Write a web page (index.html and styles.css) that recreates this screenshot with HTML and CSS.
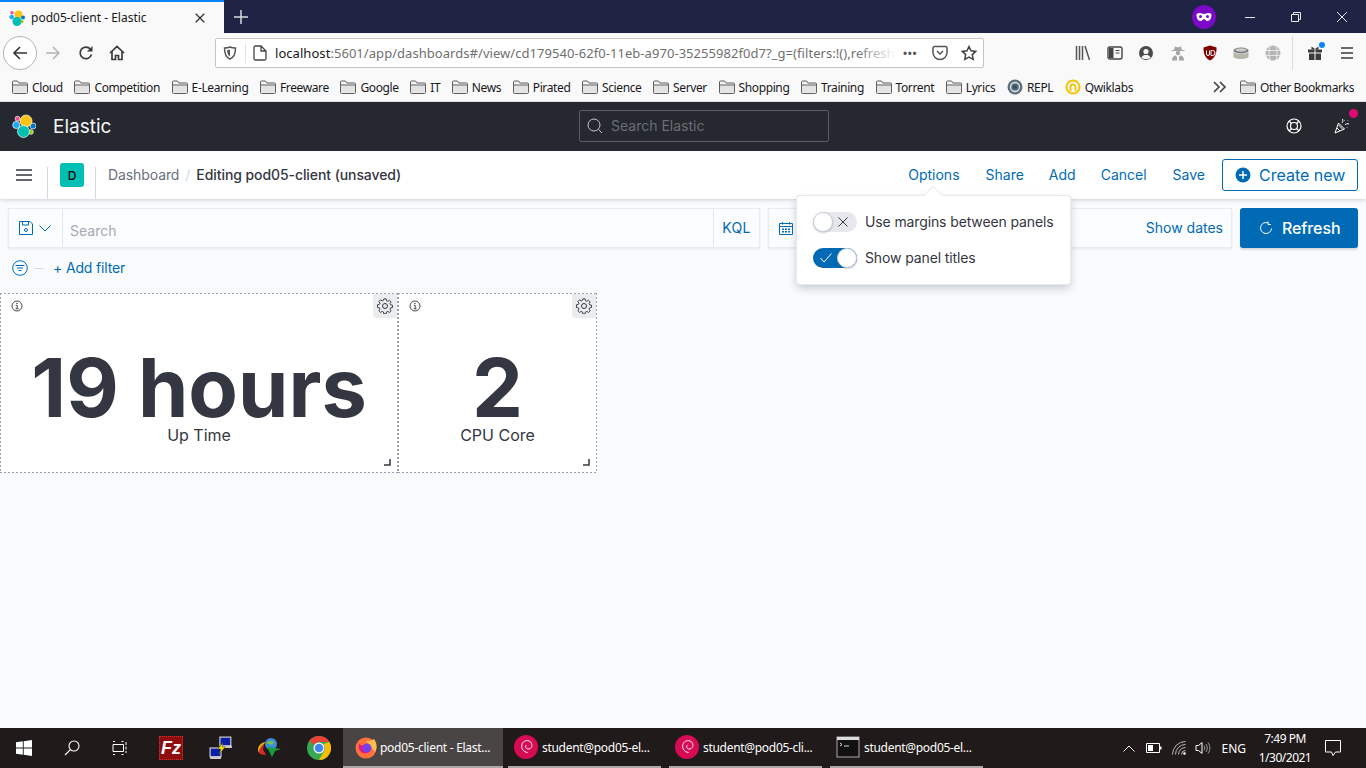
FILE: index.html
```html
<!DOCTYPE html>
<html lang="en">
<head>
<meta charset="utf-8">
<title>pod05-client - Elastic</title>
<link rel="stylesheet" href="styles.css">
</head>
<body>
<svg class="defs" width="0" height="0" aria-hidden="true">
  <defs>
    <symbol id="folder" viewBox="0 0 16 14"><path d="M.5 12.500V2a1 1 0 0 1 1-1h4l1.500 2h7.500a1 1 0 0 1 1 1v8.500a1 1 0 0 1-1 1h-13a1 1 0 0 1-1-1z" fill="#f4f4f4" stroke="#5f5f5f"/><path d="M1 5.500h14v7H1z" fill="#e3e3e3"/><path d="M.5 5h15" stroke="#5f5f5f"/></symbol>
    <symbol id="gear" viewBox="0 0 16 16"><path d="M6.800.8h2.400l.4 2 1.300.6 1.800-1.100 1.700 1.700-1.100 1.800.6 1.300 2 .4v2.400l-2 .4-.6 1.300 1.100 1.800-1.700 1.700-1.800-1.100-1.300.6-.4 2H6.800l-.4-2-1.300-.6-1.800 1.100-1.700-1.700 1.100-1.800-.6-1.300-2-.4V7l2-.4.6-1.300-1.100-1.800 1.700-1.700 1.800 1.100 1.300-.6z" transform="translate(.4 .1) scale(.95)" fill="none" stroke="#343741" stroke-width="1"/><circle cx="8" cy="8" r="2.500" fill="none" stroke="#343741"/></symbol>
    <symbol id="info" viewBox="0 0 12 12"><circle cx="6" cy="6" r="5" fill="none" stroke="#343741" stroke-width=".9"/><path d="M4.800 5.400H6.200V8.800M4.600 8.800h3" fill="none" stroke="#343741" stroke-width=".9"/><circle cx="5.900" cy="3.500" r=".7" fill="#343741"/></symbol>
    <symbol id="debian" viewBox="0 0 24 24"><circle cx="12" cy="12" r="12" fill="#d70a53"/><path d="M13.500 17.500C9.500 17 7 13.500 7.800 9.800 8.600 6.500 12 4.800 15 6c2.700 1.100 3.700 4.100 2.300 6.400-1.200 1.800-3.500 2.100-4.900 1-1-.9-1-2.600 0-3.500" fill="none" stroke="#fff" stroke-width="1"/></symbol>
  </defs>
</svg>

<header class="tabbar">
  <div class="tab">
    <svg class="favicon" viewBox="0 0 16 16"><circle cx="9.500" cy="4.500" r="4" fill="#fec514"/><circle cx="8" cy="11.500" r="4.500" fill="#00bfb3"/><circle cx="2.700" cy="7" r="2.300" fill="#1ba9f5"/><circle cx="3" cy="2.700" r="1.700" fill="#f04e98"/><circle cx="14" cy="7.500" r="2" fill="#0077cc"/><circle cx="13" cy="11.500" r="1.500" fill="#93c90e"/></svg>
    <span class="tab-title">pod05-client - Elastic</span>
    <svg class="tab-close" viewBox="0 0 10 10"><path d="M.7.700l8.600 8.600M9.300.700L.7 9.300" stroke="#333" stroke-width="1.300"/></svg>
  </div>
  <svg class="new-tab" viewBox="0 0 14 14"><path d="M7 0v14M0 7h14" stroke="#d8d8e0" stroke-width="1.500"/></svg>
  <div class="spacer"></div>
  <svg class="private" viewBox="0 0 24 24"><circle cx="12" cy="12" r="12" fill="#7c09c9"/><path d="M4.500 10c0-1.500 1.500-2 3-2 2 0 3 1 4.500 1s2.500-1 4.500-1c1.500 0 3 .5 3 2 0 3-1.500 6-4 6-2 0-2.500-2-3.500-2s-1.500 2-3.500 2c-2.500 0-4-3-4-6z" fill="#fff"/><circle cx="8.500" cy="11.500" r="1.500" fill="#7c09c9"/><circle cx="15.500" cy="11.500" r="1.500" fill="#7c09c9"/></svg>
  <div class="win-btn"><svg viewBox="0 0 10 10"><path d="M0 5.500h10" stroke="#e6e6ee"/></svg></div>
  <div class="win-btn"><svg viewBox="0 0 10 10"><path d="M.5 2.500h7v7h-7zM2.500 2.500V.5h7v7h-2" fill="none" stroke="#e6e6ee"/></svg></div>
  <div class="win-btn"><svg viewBox="0 0 10 10"><path d="M0 0l10 10M10 0L0 10" stroke="#e6e6ee"/></svg></div>
</header>

<nav class="toolbar">
  <div class="back-btn"><svg viewBox="0 0 16 16"><path d="M15 8H2M8 2L2 8l6 6" fill="none" stroke="#333" stroke-width="1.600"/></svg></div>
  <svg class="tool-ico fwd" viewBox="0 0 16 16"><path d="M1 8h13M8 2l6 6-6 6" fill="none" stroke="#b4b4b4" stroke-width="1.500"/></svg>
  <svg class="tool-ico reload" viewBox="0 0 16 16"><path d="M13.500 9.500A5.800 5.800 0 1 1 12.300 4" fill="none" stroke="#3a3a3a" stroke-width="1.700"/><path d="M14.500 1v5.500H9z" fill="#3a3a3a"/></svg>
  <svg class="tool-ico home" viewBox="0 0 16 16"><path d="M1 8l7-6.500L15 8M3 6.500V14.500h3.500v-4h3v4H13V6.500" fill="none" stroke="#3a3a3a" stroke-width="1.700"/></svg>
  <div class="urlbar">
    <svg class="shield" viewBox="0 0 14 14"><path d="M7 1c2 .9 3.500 1 5.500 1 0 5-1.500 9.500-5.500 11C3 11.500 1.500 7 1.500 2 3.500 2 5 1.900 7 1z" fill="none" stroke="#555" stroke-width="1.500"/><path d="M7 3.500v7C5 9.500 4.200 7 4 4.300 5 4.300 6 4 7 3.500z" fill="#555"/></svg>
    <span class="url-sep"></span>
    <svg class="page-ico" viewBox="0 0 14 16"><path d="M1 2.500A1.500 1.500 0 0 1 2.500 1h5.500L13 6v7.500a1.500 1.500 0 0 1-1.500 1.500h-9A1.500 1.500 0 0 1 1 13.500zM8 1v5h5" fill="none" stroke="#444" stroke-width="1.300"/></svg>
    <div class="url"><span class="url-host">localhost</span>:5601/app/dashboards#/view/cd179540-62f0-11eb-a970-35255982f0d7?_g=(filters:!(),refresh</div>
    <span class="url-fade"></span>
    <span class="url-dots">•••</span>
    <svg class="url-ico pocket" viewBox="0 0 16 16"><path d="M1 3a1.500 1.500 0 0 1 1.500-1.500h11A1.500 1.500 0 0 1 15 3v4.500a7 7 0 0 1-14 0z" fill="none" stroke="#555" stroke-width="1.500"/><path d="M5 6l3 3 3-3" fill="none" stroke="#555" stroke-width="1.500"/></svg>
    <svg class="url-ico star" viewBox="0 0 16 16"><path d="M8 1.500l2 4.300 4.700.6-3.400 3.200.9 4.700L8 12l-4.200 2.300.9-4.700L1.300 6.400 6 5.800z" fill="none" stroke="#444" stroke-width="1.500"/></svg>
  </div>
  <div class="ext-icons">
    <svg class="ext" viewBox="0 0 16 16"><path d="M1.500 1v14M4.500 1v14M7.500 1v14M10 1l4.500 14" stroke="#555" stroke-width="1.500"/></svg>
    <svg class="ext" viewBox="0 0 16 16"><rect x="1" y="2" width="14" height="12" rx="2" fill="none" stroke="#444" stroke-width="1.400"/><path d="M2 3h4.500v10H2z" fill="#444"/><path d="M8.500 5.500h4M8.500 8h4" stroke="#444"/></svg>
    <svg class="ext" viewBox="0 0 16 16"><circle cx="8" cy="8" r="7" fill="#4a4a4a"/><circle cx="8" cy="6.500" r="2.600" fill="#f9f9fa"/><path d="M3.500 12.500C4.500 10.500 6 10 8 10s3.500.5 4.500 2.500C11.500 13.800 10 14 8 14s-3.500-.2-4.500-1.500z" fill="#f9f9fa"/></svg>
    <svg class="ext" viewBox="0 0 16 16"><path d="M5 1.500l3 1 3-1 1 3.500h2.500v1h-13V5H4z" fill="#a5a5a5"/><circle cx="8" cy="8" r="2.200" fill="#a5a5a5"/><path d="M2 15.500c0-3.500 1.500-5 4-5l1 2v3zM14 15.500c0-3.500-1.500-5-4-5l-1 2v3z" fill="#a5a5a5"/></svg>
    <svg class="ext" viewBox="0 0 16 16"><path d="M8 .5l6.500 2c.2 6-1.500 10.500-6.500 13-5-2.500-6.700-7-6.500-13z" fill="#800000"/><path d="M4.500 5.500v3.500a1.500 1.500 0 0 0 3 0V5.500M9 5.500V10.500h1.500a2.500 2.500 0 0 0 0-5z" fill="none" stroke="#fff" stroke-width="1"/></svg>
    <svg class="ext" viewBox="0 0 16 16"><ellipse cx="8" cy="5.500" rx="7.500" ry="3" fill="#777"/><ellipse cx="8" cy="5" rx="5.500" ry="1.700" fill="#ccc"/><path d="M.5 6.500v5c0 1.500 3.200 2.500 7.500 2.500s7.500-1 7.500-2.500v-5c-1 1.800-4.500 2.500-7.500 2.500S1.500 8.300.5 6.500z" fill="#b5b5a8"/></svg>
    <svg class="ext" viewBox="0 0 16 16"><circle cx="8" cy="8" r="7.500" fill="#b5b5b5"/><path d="M0 5.500h16M0 10.500h16M5.500 0c-2 5-2 11 0 16M10.500 0c2 5 2 11 0 16" fill="none" stroke="#f2f2f2" stroke-width=".8"/></svg>
    <span class="ext-sep"></span>
    <span class="gift"><svg class="ext" viewBox="0 0 16 16"><path d="M1 4.500h6.500v3H1zM8.500 4.500H15v3H8.500zM2 8.500h5.500V15H2zM8.500 8.500H14V15H8.500z" fill="#3a3a3a"/><path d="M4.500 1.500L8 4l3.500-2.500v3h-7z" fill="#3a3a3a"/></svg><span class="gift-dot"></span></span>
    <svg class="ext" viewBox="0 0 16 16"><path d="M2 3h12M2 8h12M2 13h12" stroke="#3a3a3a" stroke-width="1.700"/></svg>
  </div>
</nav>

<div class="bookmarks">
  <a class="bm"><svg class="bm-ico"><use href="#folder"/></svg>Cloud</a>
  <a class="bm"><svg class="bm-ico"><use href="#folder"/></svg>Competition</a>
  <a class="bm"><svg class="bm-ico"><use href="#folder"/></svg>E-Learning</a>
  <a class="bm"><svg class="bm-ico"><use href="#folder"/></svg>Freeware</a>
  <a class="bm"><svg class="bm-ico"><use href="#folder"/></svg>Google</a>
  <a class="bm"><svg class="bm-ico"><use href="#folder"/></svg>IT</a>
  <a class="bm"><svg class="bm-ico"><use href="#folder"/></svg>News</a>
  <a class="bm"><svg class="bm-ico"><use href="#folder"/></svg>Pirated</a>
  <a class="bm"><svg class="bm-ico"><use href="#folder"/></svg>Science</a>
  <a class="bm"><svg class="bm-ico"><use href="#folder"/></svg>Server</a>
  <a class="bm"><svg class="bm-ico"><use href="#folder"/></svg>Shopping</a>
  <a class="bm"><svg class="bm-ico"><use href="#folder"/></svg>Training</a>
  <a class="bm"><svg class="bm-ico"><use href="#folder"/></svg>Torrent</a>
  <a class="bm"><svg class="bm-ico"><use href="#folder"/></svg>Lyrics</a>
  <a class="bm"><svg class="bm-ico" viewBox="0 0 16 16"><circle cx="8" cy="8" r="7.500" fill="#5d6f7c"/><circle cx="8" cy="8" r="4.500" fill="none" stroke="#dfe6ea" stroke-width="1.300"/><circle cx="8" cy="8" r="2" fill="#3d4f5c"/></svg>REPL</a>
  <a class="bm"><svg class="bm-ico" viewBox="0 0 16 16"><circle cx="8" cy="8" r="6.500" fill="none" stroke="#f5c400" stroke-width="2"/><path d="M5.500 12V8a2.500 2.500 0 0 1 5 0v4" fill="none" stroke="#f5c400" stroke-width="1.800"/></svg>Qwiklabs</a>
  <div class="spacer"></div>
  <svg class="chev" viewBox="0 0 14 12"><path d="M1 1l5 5-5 5M7 1l5 5-5 5" fill="none" stroke="#444" stroke-width="1.700"/></svg>
  <a class="bm"><svg class="bm-ico"><use href="#folder"/></svg>Other Bookmarks</a>
</div>

<div class="k-header">
  <div class="k-brand">
    <svg class="k-logo" viewBox="0 0 24 24"><g stroke="#fff" stroke-width=".7"><circle cx="5.500" cy="4.700" r="2.400" fill="#f04e98"/><circle cx="4.300" cy="11" r="3.600" fill="#1ba9f5"/><circle cx="21" cy="12" r="3" fill="#0077cc"/><circle cx="19" cy="18" r="2.300" fill="#93c90e"/><circle cx="14" cy="7" r="6" fill="#fec514"/><circle cx="11.500" cy="17.500" r="6" fill="#00bfb3"/></g></svg>
    <span class="k-name">Elastic</span>
  </div>
  <div class="k-search">
    <svg class="k-search-ico" viewBox="0 0 16 16"><circle cx="7" cy="7" r="6" fill="none" stroke="#c8c9cc"/><path d="M11.500 11.500L15 15" stroke="#c8c9cc"/></svg>
    <span class="k-search-text">Search Elastic</span>
  </div>
  <div class="k-right">
    <svg class="k-ico" viewBox="0 0 16 16"><circle cx="8" cy="8" r="7" fill="none" stroke="#fff" stroke-width="1.200"/><circle cx="8" cy="8" r="3.500" fill="none" stroke="#fff" stroke-width="1.200"/><path d="M3 3l2.500 2.500M13 3l-2.500 2.500M3 13l2.500-2.500M13 13l-2.500-2.500" stroke="#fff" stroke-width="1.200"/></svg>
    <span class="k-news">
      <svg class="k-ico" viewBox="0 0 16 16"><path d="M1 15l3.500-10 6 6z" fill="none" stroke="#fff"/><path d="M3 10l3 3M4.500 7l4 4M8 5c1-1 1-2.500.5-4M11 7c1-1.500 2.500-1.500 4-1M10.500 2.500v.5M14 2v.5M13 9.500v.5" stroke="#fff" fill="none"/></svg>
      <span class="k-news-dot"></span>
    </span>
  </div>
</div>

<main class="kibana">
  <div class="k-bar">
    <svg class="burger" viewBox="0 0 16 12"><path d="M0 1h16M0 6h16M0 11h16" stroke="#343741" stroke-width="1.700"/></svg>
    <span class="k-sep sep-a"></span>
    <span class="avatar">D</span>
    <span class="k-sep sep-b"></span>
    <span class="crumb">Dashboard</span>
    <span class="crumb-slash">/</span>
    <span class="crumb-cur">Editing pod05-client (unsaved)</span>
    <div class="spacer"></div>
    <a class="k-link">Options</a>
    <a class="k-link l-share">Share</a>
    <a class="k-link l-add">Add</a>
    <a class="k-link l-cancel">Cancel</a>
    <a class="k-link l-save">Save</a>
    <a class="create-btn">
      <svg class="create-ico" viewBox="0 0 16 16"><circle cx="8" cy="8" r="7.500" fill="#006bb4"/><path d="M8 4v8M4 8h8" stroke="#fff" stroke-width="1.500"/></svg>
      Create new
    </a>
  </div>

  <div class="query-row">
    <div class="query-box">
      <div class="saved-btn">
        <svg class="saved-ico" viewBox="0 0 14 14"><path d="M.5.500h10.500l2.500 2.500v10.500H.5z" fill="none" stroke="#006bb4"/><path d="M3.500.500v3.500h6V.500" fill="none" stroke="#006bb4"/><circle cx="7" cy="9" r="1.500" fill="none" stroke="#006bb4"/></svg>
        <svg class="saved-chev" viewBox="0 0 12 7"><path d="M.5.500l5.500 5.500L11.500.500" fill="none" stroke="#006bb4"/></svg>
      </div>
      <span class="search-ph">Search</span>
      <a class="kql">KQL</a>
    </div>
    <div class="date-box">
      <div class="date-cal"><svg class="cal-ico" viewBox="0 0 14 14"><path d="M.5 2.500h13v11H.5zM.5 5.500h13" fill="none" stroke="#006bb4"/><path d="M3.500 1v2.500M10.500 1v2.500" stroke="#006bb4"/><path d="M3 7.500h2v1.500H3zM6 7.500h2v1.500H6zM9 7.500h2v1.500H9zM3 10h2v1.500H3zM6 10h2v1.500H6zM9 10h2v1.500H9z" fill="#006bb4"/></svg></div>
      <div class="spacer"></div>
      <a class="show-dates">Show dates</a>
    </div>
    <a class="refresh-btn">
      <svg class="refresh-ico" viewBox="0 0 14 14"><path d="M12.500 7.500A5.500 5.500 0 1 1 9 1.900M9 .5v3h2.800" fill="none" stroke="#fff"/></svg>
      Refresh
    </a>
  </div>

  <div class="filter-row">
    <svg class="filter-ico" viewBox="0 0 16 16"><circle cx="8" cy="8" r="7.300" fill="none" stroke="#006bb4"/><path d="M3.500 5.500h9M5 8h6M6.500 10.500h3" stroke="#006bb4"/></svg>
    <span class="filter-dash"></span>
    <a class="add-filter">+ Add filter</a>
  </div>

  <section class="grid">
    <article class="panel panel-wide">
      <svg class="p-info"><use href="#info"/></svg>
      <span class="p-gear"><svg class="p-gear-ico"><use href="#gear"/></svg></span>
      <div class="metric">19 hours</div>
      <div class="metric-label">Up Time</div>
      <svg class="p-resize" viewBox="0 0 7 7"><path d="M6 0v6H0" fill="none" stroke="#343741" stroke-width="1.500"/></svg>
    </article>
    <article class="panel panel-narrow">
      <svg class="p-info"><use href="#info"/></svg>
      <span class="p-gear"><svg class="p-gear-ico"><use href="#gear"/></svg></span>
      <div class="metric">2</div>
      <div class="metric-label">CPU Core</div>
      <svg class="p-resize" viewBox="0 0 7 7"><path d="M6 0v6H0" fill="none" stroke="#343741" stroke-width="1.500"/></svg>
    </article>
  </section>

  <div class="popover">
    <span class="pop-arrow"></span>
    <div class="pop-row">
      <span class="switch off"><span class="knob"></span><svg class="sw-x" viewBox="0 0 10 10"><path d="M.5.500l9 9M9.500.500l-9 9" stroke="#343741"/></svg></span>
      <span class="pop-label">Use margins between panels</span>
    </div>
    <div class="pop-row">
      <span class="switch on"><svg class="sw-check" viewBox="0 0 12 10"><path d="M.5 5l3.500 4L11.500.5" fill="none" stroke="#fff"/></svg><span class="knob"></span></span>
      <span class="pop-label">Show panel titles</span>
    </div>
  </div>
</main>

<footer class="taskbar">
  <svg class="tb-ico t-win" viewBox="0 0 16 16"><path d="M0 2.300L6.800 1.300V7.500H0zM7.700 1.200L16 0V7.500H7.700zM0 8.400h6.800v6.300L0 13.700zM7.700 8.400H16V16l-8.300-1.200z" fill="#fff"/></svg>
  <svg class="tb-ico t-search" viewBox="0 0 16 16"><circle cx="10" cy="6" r="5" fill="none" stroke="#fff" stroke-width="1.100"/><path d="M6.500 9.500L1 15" stroke="#fff" stroke-width="1.100"/></svg>
  <svg class="tb-ico t-view" viewBox="0 0 16 16"><path d="M1 4.500h10.500v7H1zM1 1.500h2M9.500 1.500h2M1 14.500h2M9.500 14.500h2M14 2v3M14 6.500v3M14 11v2" fill="none" stroke="#fff"/></svg>
  <span class="fz-ico"><span class="fz-text">Fz</span></span>
  <svg class="tb-ico t-net" viewBox="0 0 22 22"><rect x="10" y="1" width="10" height="8" fill="#0a1fa8" stroke="#ddd"/><rect x="1" y="11" width="10" height="8" fill="#0a1fa8" stroke="#ddd"/><path d="M1 20h10M11 10h10" stroke="#ccc" stroke-width="2"/><path d="M13 6l-5 6h3l-2 5 6-7h-3z" fill="#ffe600" stroke="#222" stroke-width=".4"/></svg>
  <svg class="tb-ico t-idm" viewBox="0 0 24 22"><path d="M1 13c0-5 4-8 8-8-3 2-4 5-3 8l2 4C4 17 1 16 1 13z" fill="#e3b300"/><path d="M2 15c0-3 2-6 5-8l-1 6 3 5C5 18 2 17 2 15z" fill="#d3282d"/><circle cx="14" cy="7" r="6" fill="#3a8fd8"/><path d="M9 6c2-2 5-3 8-1l-2 3z" fill="#7cc243"/><path d="M10 10l14 2-6 2-3 6z" fill="#1a9b3c"/></svg>
  <svg class="tb-ico t-chrome" viewBox="0 0 24 24"><circle cx="12" cy="12" r="12" fill="#34a853"/><path d="M12 0a12 12 0 0 1 10.400 6H12a6 6 0 0 0-5.500 3.500L2.500 4.500A12 12 0 0 1 12 0z" fill="#ea4335"/><path d="M22.400 6A12 12 0 0 1 12 24l5.200-9A6 6 0 0 0 16.500 8z" fill="#fbbc05"/><circle cx="12" cy="12" r="5.500" fill="#fff"/><circle cx="12" cy="12" r="4.300" fill="#4285f4"/></svg>
  <div class="tb-item active">
    <svg class="tb-app" viewBox="0 0 24 24"><circle cx="12" cy="13" r="10.500" fill="#ff7139"/><path d="M20 4c3 4 3.500 9 1 13L12 6c3 0 6-.5 8-2z" fill="#ffbd4f"/><path d="M4 6c1 4 3 6 8 3 4 1 5 4 4 6-1 3-4 4-7 3C6 17 4 13 5 10z" fill="#e31587"/><circle cx="13" cy="13" r="4.500" fill="#7542e5"/></svg>
    <span class="tb-text">pod05-client - Elast...</span>
  </div>
  <div class="tb-item">
    <svg class="tb-app"><use href="#debian"/></svg>
    <span class="tb-text">student@pod05-el...</span>
  </div>
  <div class="tb-item">
    <svg class="tb-app"><use href="#debian"/></svg>
    <span class="tb-text">student@pod05-cli...</span>
  </div>
  <div class="tb-item">
    <svg class="tb-app" viewBox="0 0 24 24"><rect x="1" y="2" width="22" height="20" fill="#111" stroke="#aaa"/><rect x="1" y="2" width="22" height="3" fill="#ddd"/><path d="M4 8l2 1.500L4 11M8 11h5" fill="none" stroke="#ddd"/></svg>
    <span class="tb-text">student@pod05-el...</span>
  </div>
  <div class="spacer"></div>
  <div class="tray">
    <svg class="tr-up" viewBox="0 0 12 7"><path d="M.5 6.500L6 1l5.500 5.500" fill="none" stroke="#fff"/></svg>
    <svg class="tr-bat" viewBox="0 0 16 10"><path d="M.5.500h13v9H.5z" fill="none" stroke="#fff"/><path d="M2 2h5v6H2z" fill="#fff"/><path d="M14 3.500h1.500v3H14z" fill="#fff"/></svg>
    <svg class="tr-wifi" viewBox="0 0 14 14"><path d="M.5 13.500a13 13 0 0 1 13-13M3.500 13.500a10 10 0 0 1 10-10M6.500 13.500a7 7 0 0 1 7-7M9.500 13.500a4 4 0 0 1 4-4" fill="none" stroke="#bbb"/><circle cx="12.500" cy="12.500" r="1.300" fill="#fff"/></svg>
    <svg class="tr-vol" viewBox="0 0 16 14"><path d="M1 4.500h2.500L7 1.500v11l-3.500-3H1z" fill="none" stroke="#fff"/><path d="M9 4.500c1 1.500 1 3.500 0 5M11 3c1.700 2.500 1.700 5.500 0 8M13 1.500c2.500 3.500 2.500 7.500 0 11" fill="none" stroke="#999"/></svg>
    <span class="tr-lang">ENG</span>
    <div class="tr-clock"><span>7:49 PM</span><span>1/30/2021</span></div>
    <svg class="tr-note" viewBox="0 0 16 16"><path d="M.5.500h15v11.500h-5L8 15.500 6.500 12h-6z" fill="none" stroke="#fff"/></svg>
  </div>
</footer>
</body>
</html>
```
FILE: styles.css
```css
* { box-sizing: border-box; }
html, body { margin: 0; padding: 0; width: 1366px; height: 768px; overflow: hidden; }
body { display: flex; flex-direction: column; font-family: "Inter", "Liberation Sans", sans-serif; background: #fafbfd; color: #343741; position: relative; }
svg { display: block; flex: none; }
.defs { position: absolute; }
.spacer { flex: 1; }
a { color: inherit; text-decoration: none; }

/* browser tab strip */
.tabbar { height: 33px; background: #1f2444; display: flex; align-items: center; flex: none; }
.tab { width: 224px; height: 33px; background: #f9f9fa; border-top: 2px solid #0a84ff; display: flex; align-items: center; padding-left: 9px; }
.favicon { width: 16px; height: 16px; }
.tab-title { font: 12px "Noto Sans", sans-serif; color: #18181a; margin-left: 6px; width: 163px; white-space: nowrap; }
.tab-close { width: 10px; height: 10px; margin-left: 1px; }
.new-tab { width: 14px; height: 14px; margin-left: 10px; }
.private { width: 24px; height: 24px; margin-right: 11px; }
.win-btn { width: 46px; height: 33px; display: flex; align-items: center; justify-content: center; }
.win-btn svg { width: 10px; height: 10px; }
.win-btn:last-child { margin-right: 1px; }

/* browser toolbar */
.toolbar { height: 39px; background: #f9f9fa; display: flex; align-items: center; flex: none; padding-left: 3px; }
.back-btn { width: 34px; height: 34px; flex: none; border-radius: 50%; border: 1px solid #b5b5b5; background: #fff; display: flex; align-items: center; justify-content: center; }
.back-btn svg { width: 16px; height: 16px; }
.tool-ico { width: 16px; height: 16px; }
.fwd { margin-left: 8px; }
.reload { margin-left: 17px; }
.home { margin-left: 15px; }
.urlbar { width: 769px; height: 30px; margin-left: 90px; background: #fff; border: 1px solid #c4c4c4; border-radius: 2px; display: flex; align-items: center; position: relative; flex: none; padding-left: 7px; }
.shield { width: 14px; height: 14px; }
.url-sep { width: 1px; height: 20px; background: #e4e4e4; margin-left: 8px; }
.page-ico { width: 14px; height: 16px; margin-left: 7px; }
.url { font: 13px "Noto Sans", sans-serif; letter-spacing: .05px; color: #707070; margin-left: 8px; width: 619px; white-space: nowrap; overflow: hidden; flex: none; }
.url-host { color: #18181a; }
.url-fade { position: absolute; left: 640px; top: 0; width: 40px; height: 28px; background: linear-gradient(to right, rgba(255,255,255,0), #fff); }
.url-dots { font: 700 11px "Noto Sans", sans-serif; color: #555; margin-left: 9px; letter-spacing: .6px; width: 18px; flex: none; white-space: nowrap; }
.url-ico { width: 16px; height: 16px; }
.pocket { margin-left: 11px; }
.star { margin-left: 13px; }
.ext-icons { display: flex; align-items: center; margin-left: 91px; flex: none; }
.ext { width: 16px; height: 16px; margin-right: 15.700px; }
.ext-sep { width: 1px; height: 34px; background: #dcdcdc; margin-right: 14px; margin-left: -5px; }
.gift { position: relative; display: block; }
.gift-dot { position: absolute; right: 14px; top: -3px; width: 6px; height: 6px; background: #0a84ff; border-radius: 50%; }

/* bookmarks */
.bookmarks { height: 30px; background: #f9f9fa; display: flex; align-items: center; padding: 1px 12px 0 12px; gap: 11.600px; flex: none; font: 12px "Noto Sans", sans-serif; color: #18181a; border-bottom: 1px solid #e0e0e0; }
.bm { display: flex; align-items: center; gap: 4px; white-space: nowrap; letter-spacing: -.38px; }
.bm-ico { width: 16px; height: 16px; }
.chev { width: 14px; height: 12px; margin-right: 1px; }

/* kibana header */
.k-header { height: 49px; background: #25282f; display: flex; align-items: center; flex: none; position: relative; padding: 0 0 1px 12px; }
.k-brand { display: flex; align-items: center; width: 567px; }
.k-logo { width: 24px; height: 24px; }
.k-name { font-size: 19px; font-weight: 400; color: #f5f7fa; margin-left: 17px; }
.k-search { width: 250px; height: 32px; border: 1px solid #5a5d63; border-radius: 2px; display: flex; align-items: center; padding-left: 7px; background: #25282f; }
.k-search-ico { width: 16px; height: 16px; }
.k-search-text { font-size: 14px; color: #6b6e75; margin: 0 0 2px 8px; }
.k-right { margin-left: auto; display: flex; align-items: center; gap: 32px; padding-right: 16px; }
.k-ico { width: 16px; height: 16px; }
.k-news { position: relative; display: block; }
.k-news-dot { position: absolute; top: -9px; right: -8px; width: 9px; height: 9px; border-radius: 50%; background: #dd0a73; }

/* kibana app */
.kibana { flex: 1; position: relative; background: #fafbfd; min-height: 0; }
.k-bar { height: 48px; background: #fff; display: flex; align-items: center; box-shadow: 0 1px 4px rgba(65,78,101,.25); position: relative; padding-left: 16px; padding-right: 8px; }
.burger { width: 16px; height: 12px; }
.k-sep { width: 1px; height: 32px; background: #d3dae6; align-self: flex-end; }
.sep-a { margin-left: 15px; }
.avatar { width: 24px; height: 24px; background: #00bfb3; color: #000; font-size: 12px; font-weight: 500; border-radius: 3px; display: flex; align-items: center; justify-content: center; margin-left: 12px; }
.sep-b { margin-left: 11px; }
.crumb { font-size: 14px; letter-spacing: -.1px; color: #69707d; margin: 0 0 2px 12px; }
.crumb-slash { font-size: 14px; color: #d3dae6; margin: 0 6px 2px; }
.crumb-cur { font-size: 14px; letter-spacing: -.08px; font-weight: 500; color: #343741; margin-bottom: 2px; }
.k-link { font-size: 14px; color: #006bb4; margin-bottom: 2px; }
.l-share, .l-save { margin-left: 26px; }
.l-add, .l-cancel { margin-left: 25px; }
.create-btn { width: 136px; height: 32px; margin-left: 17px; border: 1px solid #006bb4; border-radius: 3px; display: flex; align-items: center; padding-left: 12px; color: #006bb4; font-size: 16px; font-weight: 400; gap: 8px; }
.create-ico { width: 16px; height: 16px; }

.query-row { display: flex; height: 40px; margin-top: 9px; padding: 0 8px; }
.query-box { width: 752px; background: #fbfcfd; border: 1px solid #e8ebf2; box-shadow: 0 1px 2px rgba(65,78,101,.1); display: flex; align-items: center; }
.saved-btn { width: 54px; height: 38px; border-right: 1px solid #e0e5ee; display: flex; align-items: center; padding-left: 10px; gap: 6px; }
.saved-ico { width: 14px; height: 14px; }
.saved-chev { width: 12px; height: 7px; }
.search-ph { font-size: 14px; color: #a5a9b2; margin-left: 7px; padding-top: 5px; flex: 1; }
.kql { width: 46px; height: 38px; border-left: 1px solid #e0e5ee; padding-bottom: 2px; font-size: 14px; font-weight: 400; letter-spacing: .3px; color: #006bb4; display: flex; align-items: center; justify-content: center; }
.date-box { width: 464px; margin-left: 8px; background: #fbfcfd; border: 1px solid #e8ebf2; box-shadow: 0 1px 2px rgba(65,78,101,.1); display: flex; align-items: center; padding-right: 8px; }
.date-cal { width: 36px; padding-left: 10px; }
.cal-ico { width: 14px; height: 14px; }
.show-dates { font-size: 14px; color: #006bb4; margin-bottom: 2px; }
.refresh-btn { width: 118px; height: 40px; margin-left: 8px; background: #006bb4; color: #fff; border-radius: 3px; font-size: 16px; font-weight: 500; letter-spacing: -.1px; display: flex; align-items: center; padding-left: 19px; gap: 9px; box-shadow: 0 2px 2px rgba(65,78,101,.2); }
.refresh-ico { width: 14px; height: 14px; }

.filter-row { display: flex; align-items: center; height: 20px; margin-top: 10px; padding-left: 12px; }
.filter-ico { width: 16px; height: 16px; }
.filter-dash { width: 10px; height: 1px; background: #d3dae6; margin-left: 6px; }
.add-filter { font-size: 14px; letter-spacing: -.15px; color: #006bb4; margin: 0 0 2px 9px; }

.grid { display: flex; margin-top: 15px; }
.panel {
  height: 180px;
  position: relative;
  display: flex;
  flex-direction: column;
  align-items: center;
  padding-top: 60px;
  background-color: #fff;
  background-image:
    repeating-linear-gradient(to right, #98a2b3 0 2px, transparent 2px 4px),
    repeating-linear-gradient(to right, #98a2b3 0 2px, transparent 2px 4px),
    repeating-linear-gradient(to bottom, #98a2b3 0 2px, transparent 2px 4px),
    repeating-linear-gradient(to bottom, #98a2b3 0 2px, transparent 2px 4px);
  background-size: 100% 1px, 100% 1px, 1px 100%, 1px 100%;
  background-position: 0 0, 0 100%, 0 0, 100% 0;
  background-repeat: no-repeat;
}
.panel-wide { width: 398px; }
.panel-narrow { width: 199px; }
.metric { font-size: 81px; font-weight: 700; line-height: 70px; color: #343741; white-space: nowrap; }
.metric-label { font-size: 16px; line-height: 20px; color: #343741; margin-top: 2px; }
.p-info { position: absolute; left: 11px; top: 7px; width: 12px; height: 12px; }
.p-gear { position: absolute; right: 1px; top: 1px; width: 24px; height: 24px; background: #ebecee; border-radius: 0 0 0 4px; display: flex; align-items: center; justify-content: center; }
.p-gear-ico { width: 16px; height: 16px; }
.p-resize { position: absolute; right: 7px; bottom: 7px; width: 7px; height: 7px; }

.popover { position: absolute; left: 797px; top: 45px; width: 273px; height: 88px; background: #fff; border-radius: 3px; box-shadow: 0 0 0 1px #e6e9f0, 0 4px 10px rgba(65,78,101,.3); padding: 16px 16px 0; display: flex; flex-direction: column; gap: 16px; }
.pop-arrow { position: absolute; left: 127px; top: -9px; width: 18px; height: 18px; background: #fff; transform: rotate(45deg) scale(.72); box-shadow: -1px -1px 0 #dfe3ea; }
.pop-row { display: flex; align-items: center; height: 20px; }
.pop-label { font-size: 14px; letter-spacing: -.12px; color: #343741; margin: 0 0 2px 8px; white-space: nowrap; flex: none; }
.switch { width: 44px; height: 20px; flex: none; border-radius: 10px; position: relative; display: flex; align-items: center; }
.switch.off { background: #e6e8ec; }
.switch.on { background: #006bb4; justify-content: flex-end; }
.knob { width: 20px; height: 20px; border-radius: 50%; background: #fff; border: 1px solid #c9ced6; box-shadow: 0 1px 2px rgba(65,78,101,.3); flex: none; }
.switch.off .knob { margin-right: 5px; }
.sw-x { width: 10px; height: 10px; }
.sw-check { width: 12px; height: 10px; position: absolute; left: 7px; top: 5px; }

/* windows taskbar */
.taskbar { height: 40px; background: #201a1a; display: flex; align-items: center; flex: none; position: relative; color: #fff; }
.tb-ico { width: 16px; height: 16px; }
.t-win { margin-left: 16px; }
.t-search { margin-left: 32px; }
.t-view { margin-left: 32px; }
.fz-ico { width: 24px; height: 24px; margin-left: 31px; background: #8f0d0d; display: flex; align-items: center; justify-content: center; outline: 1px dotted #c33; outline-offset: -1px; flex: none; }
.fz-text { font: italic 700 18px "Liberation Sans", sans-serif; color: #fff; }
.t-net { width: 24px; height: 24px; margin-left: 26px; }
.t-idm { width: 24px; height: 22px; margin-left: 24px; }
.t-chrome { width: 24px; height: 24px; margin-left: 26px; }
.tb-item { height: 40px; display: flex; align-items: center; width: 153px; margin-left: 8px; padding: 0 0 0 6px; border-bottom: 2px solid #aaa8a8; gap: 4px; flex: none; }
.tb-item.active { width: 160px; margin-left: 12px; padding-left: 11px; background: #4a4545; gap: 2px; }
.tb-item.active + .tb-item { margin-left: 5px; }
.tb-app { width: 24px; height: 24px; }
.tb-text { font: 12px "Noto Sans", sans-serif; color: #fff; white-space: nowrap; letter-spacing: -.3px; }
.tb-item.active .tb-text { letter-spacing: -.27px; }
.tray { display: flex; align-items: center; }
.tr-up { width: 12px; height: 7px; }
.tr-bat { width: 16px; height: 10px; margin-left: 11px; }
.tr-wifi { width: 14px; height: 14px; margin-left: 10px; }
.tr-vol { width: 16px; height: 14px; margin-left: 9px; }
.tr-lang { font: 12px "Noto Sans", sans-serif; margin-left: 10px; }
.tr-clock { display: flex; flex-direction: column; align-items: center; font: 12px/19px "Noto Sans", sans-serif; width: 66px; margin-left: 6px; letter-spacing: -.5px; }
.tr-note { width: 16px; height: 16px; margin-left: 7px; margin-right: 25px; }
```
